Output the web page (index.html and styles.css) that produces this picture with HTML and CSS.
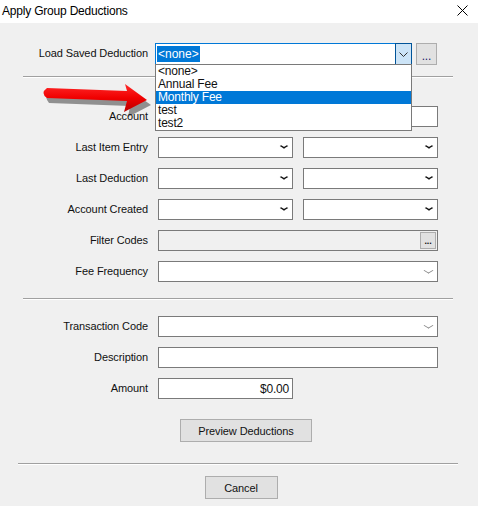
FILE: index.html
```html
<!DOCTYPE html>
<html lang="en">
<head>
  <meta charset="UTF-8">
  <title>Apply Group Deductions</title>
  <link rel="stylesheet" href="styles.css">
</head>
<body>
  <div class="dialog">
    <div class="titlebar">
      <span class="title">Apply Group Deductions</span>
      <svg class="close" width="11" height="11" viewBox="0 0 11 11"><path d="M0.5 0.5L10.5 10.5M10.5 0.5L0.5 10.5" stroke="#000" stroke-width="1"/></svg>
    </div>

    <div class="content">
      <div class="row row-load">
        <label class="lbl">Load Saved Deduction</label>
        <div class="combo open">
          <div class="combo-text"><span class="sel">&lt;none&gt;</span></div>
          <div class="combo-btn">
            <svg width="9" height="5" viewBox="0 0 9 5"><path d="M0.5 0.5L4.5 4.5L8.5 0.5" fill="none" stroke="#333" stroke-width="1"/></svg>
          </div>
          <ul class="droplist">
            <li>&lt;none&gt;</li>
            <li>Annual Fee</li>
            <li class="hl">Monthly Fee</li>
            <li>test</li>
            <li>test2</li>
          </ul>
        </div>
        <button class="btn dots">...</button>
      </div>

      <div class="sep sep-top"></div>

      <div class="rows">
        <div class="row">
          <label class="lbl">Account</label>
          <div class="field full"></div>
        </div>
        <div class="row">
          <label class="lbl">Last Item Entry</label>
          <div class="field half select"><span class="chev"></span></div>
          <div class="field half select"><span class="chev"></span></div>
        </div>
        <div class="row">
          <label class="lbl">Last Deduction</label>
          <div class="field half select"><span class="chev"></span></div>
          <div class="field half select"><span class="chev"></span></div>
        </div>
        <div class="row">
          <label class="lbl">Account Created</label>
          <div class="field half select"><span class="chev"></span></div>
          <div class="field half select"><span class="chev"></span></div>
        </div>
        <div class="row">
          <label class="lbl">Filter Codes</label>
          <div class="field full readonly"><button class="btn mini">...</button></div>
        </div>
        <div class="row">
          <label class="lbl">Fee Frequency</label>
          <div class="field full select light"><span class="chev"></span></div>
        </div>
      </div>

      <div class="sep sep-mid"></div>

      <div class="rows">
        <div class="row">
          <label class="lbl">Transaction Code</label>
          <div class="field full select light"><span class="chev"></span></div>
        </div>
        <div class="row">
          <label class="lbl">Description</label>
          <div class="field full"></div>
        </div>
        <div class="row">
          <label class="lbl">Amount</label>
          <div class="field half amount">$0.00</div>
        </div>
      </div>

      <div class="actions">
        <button class="btn preview">Preview Deductions</button>
      </div>

      <div class="sep sep-bottom"></div>

      <div class="actions cancel-row">
        <button class="btn cancel">Cancel</button>
      </div>
    </div>

    <!-- annotation arrow drawn over the form -->
    <svg class="arrow" width="478" height="506" viewBox="0 0 478 506">
      <defs>
        <linearGradient id="red" x1="0" y1="0" x2="0" y2="1">
          <stop offset="0" stop-color="#ff2a2a"/>
          <stop offset="0.5" stop-color="#f00000"/>
          <stop offset="1" stop-color="#b80000"/>
        </linearGradient>
      </defs>
      <path d="M47 91 Q42 95 47 101 L128 104 L126 115 L149 103 L128 88 L129 94 Z" fill="#000" opacity="0.4" transform="translate(2 2)"/>
      <path d="M47 88 Q40 93 47 98 L127 101 L124 112 L147 100 L125 84 L127 91 Z" fill="url(#red)"/>
    </svg>
  </div>
</body>
</html>
```

FILE: styles.css
```css
html, body { margin: 0; padding: 0; }
body { background: #f0f0f0; font-family: "Liberation Sans", Arial, sans-serif; font-size: 11px; color: #111; }

.dialog { position: relative; width: 478px; height: 506px; background: #f0f0f0; overflow: hidden; }

.titlebar { height: 23px; background: #fff; display: flex; align-items: center; justify-content: space-between; padding: 0 10px 0 2px; box-sizing: border-box; }
.title { font-size: 12px; letter-spacing: -0.2px; color: #000; margin-top: -2px; }
.close { margin-top: -3px; }

.content { padding-top: 20px; }

.row { display: flex; align-items: center; height: 21px; }
.lbl { width: 148px; text-align: right; letter-spacing: -0.1px; flex: none; margin-bottom: 2px; }
.rows { display: flex; flex-direction: column; gap: 10px; }

.row-load { height: 22px; }
.combo { position: relative; margin-left: 7px; width: 257px; height: 22px; box-sizing: border-box; border: 1px solid #0078d7; background: #fff; display: flex; }
.combo-text { flex: 1; display: flex; align-items: center; padding-left: 1px; }
.sel { background: #0078d7; color: #fff; padding: 1px 1px; line-height: 14px; font-size: 12px; }
.combo-btn { width: 15px; background: #cce4f7; border: 1px solid #005499; margin: -1px -1px -1px 0; display: flex; align-items: center; justify-content: center; }
.droplist { position: absolute; top: 20px; left: -1px; width: 257px; height: 67px; box-sizing: border-box; margin: 0; padding: 0; list-style: none; background: #fff; border: 1px solid #7a7a7a; z-index: 2; }
.droplist li { height: 13px; line-height: 13px; padding-left: 2px; font-size: 12px; letter-spacing: -0.2px; }
.droplist li.hl { background: #0078d7; color: #fff; }

.btn { font-family: inherit; font-size: 11px; color: #111; background: #e1e1e1; border: 1px solid #adadad; padding: 0; box-sizing: border-box; letter-spacing: -0.1px; }
.dots { width: 21px; height: 22px; margin-left: 4px; padding-top: 3px; font-size: 12px; color: #1a1a6a; }

.sep { height: 1px; background: #a0a0a0; border-bottom: 1px solid #fff; }
.sep-top { margin: 11px 25px 28px 23px; }
.sep-mid { margin: 16px 25px 16px 23px; }
.sep-bottom { margin: 21px 20px 11px 18px; }

.field { height: 21px; box-sizing: border-box; border: 1px solid #7a7a7a; background: #fff; position: relative; flex: none; }
.field.full { width: 280px; margin-left: 10px; }
.field.half { width: 135px; margin-left: 10px; }
.field.readonly { background: #f0f0f0; }
.field.amount { display: flex; align-items: center; justify-content: flex-end; padding-right: 3px; font-size: 12px; letter-spacing: -0.2px; }

.chev { position: absolute; right: 5px; top: 7px; width: 6px; height: 6px; border-right: 2px solid #111; border-bottom: 2px solid #111; transform: scaleY(0.6) rotate(45deg); transform-origin: center; box-sizing: border-box; margin-top: -2px; }
.select.light .chev { border-width: 0 1px 1px 0; border-color: #888; width: 7px; height: 7px; }

.mini { position: absolute; right: 1px; top: 1px; width: 16px; height: 17px; font-size: 9px; font-weight: bold; line-height: 10px; }

.actions { display: flex; justify-content: center; }
.preview { width: 132px; height: 23px; margin-top: 20px; margin-left: 14px; font-size: 11px; }
.cancel { width: 73px; height: 23px; margin-left: 4px; }

.arrow { position: absolute; left: 0; top: 0; pointer-events: none; z-index: 3; }
```
